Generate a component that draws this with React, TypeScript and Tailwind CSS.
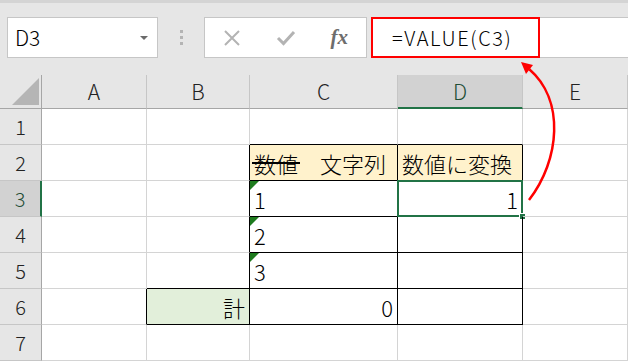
import React from 'react';

const JP = "font-['Noto_Sans_CJK_JP',sans-serif]";

function Cell({ className = '', children }: { className?: string; children?: React.ReactNode }) {
  return (
    <div className={`relative flex items-center border-r border-b px-[4px] text-[22px] font-light leading-none text-black ${className}`}>
      {children}
    </div>
  );
}

function Flag() {
  return <span className="absolute top-0 left-0 w-0 h-0 border-t-[9px] border-r-[9px] border-t-[#1e7b1e] border-r-transparent" />;
}

function RowHead({ n, selected = false }: { n: number; selected?: boolean }) {
  return (
    <div
      className={`flex items-center justify-center border-b border-b-[#c6c6c6] text-[20px] font-light leading-none ${
        selected
          ? 'bg-[#d2d2d2] border-r-2 border-r-[#217346] text-[#1f4e36]'
          : 'bg-[#e6e6e6] border-r border-r-[#a6a6a6] text-[#222]'
      }`}
    >
      {n}
    </div>
  );
}

const grid = 'border-[#d4d4d4]';

export default function App() {
  return (
    <div className={`relative w-[628px] h-[362px] overflow-hidden bg-white ${JP}`}>
      {/* Formula bar */}
      <div className="h-[75px] bg-[#e6e6e6] border-t-[3px] border-[#d4d4d4] flex items-start pt-[14px]">
        <div className="ml-[7px] w-[151px] h-[41px] bg-white border border-[#c6c6c6] flex items-center justify-between pl-[7px] pr-[9px]">
          <span className="text-[21px] font-light text-black leading-none">D3</span>
          <span className="w-0 h-0 border-l-[4px] border-r-[4px] border-t-[4px] border-l-transparent border-r-transparent border-t-[#6b6b6b]" />
        </div>
        <div className="w-[46px] h-[41px] flex flex-col items-center justify-center gap-[3px]">
          <span className="w-[3px] h-[3px] bg-[#b4b4b4]" />
          <span className="w-[3px] h-[3px] bg-[#b4b4b4]" />
          <span className="w-[3px] h-[3px] bg-[#b4b4b4]" />
        </div>
        <div className="w-[163px] h-[41px] bg-white border border-[#c6c6c6] flex items-center">
          <div className="w-[54px] flex justify-center">
            <svg width="18" height="18" viewBox="0 0 18 18">
              <path d="M2 2 L16 16 M16 2 L2 16" stroke="#b3b3b3" strokeWidth="2" fill="none" />
            </svg>
          </div>
          <div className="w-[54px] flex justify-center">
            <svg width="20" height="18" viewBox="0 0 20 18">
              <path d="M2 9 L7.5 14.5 L18 3" stroke="#b3b3b3" strokeWidth="3" fill="none" />
            </svg>
          </div>
          <div className="w-[54px] flex justify-center">
            <span className="font-['Liberation_Serif',serif] italic font-bold text-[21px] text-[#6d6d6d] leading-none">fx</span>
          </div>
        </div>
        <div className="ml-[4px] flex-1 h-[41px] bg-white border-y border-[#c6c6c6] flex">
          <div className="w-[169px] h-[41px] -mt-px border-2 border-[#ff0000] flex items-center pl-[19px]">
            <span className="text-[20px] font-light text-black leading-none tracking-[1.6px]">=VALUE(C3)</span>
          </div>
        </div>
      </div>

      {/* Sheet grid */}
      <div className="grid grid-cols-[42px_105px_103px_148px_125px_105px] grid-rows-[34px_repeat(7,36px)]">
        {/* Column headers */}
        <div className="relative bg-[#e6e6e6] border-r border-b border-[#a6a6a6]">
          <svg className="absolute left-[12px] top-[3px]" width="28" height="28" viewBox="0 0 28 28">
            <path d="M0 27 L27 27 L27 0 Z" fill="#b5b5b5" />
          </svg>
        </div>
        {['A', 'B', 'C', 'D', 'E'].map((c) => (
          <div
            key={c}
            className={`flex items-center justify-center text-[21px] font-light leading-none ${
              c === 'D'
                ? 'bg-[#d2d2d2] border-b-2 border-b-[#217346] border-r border-r-[#c6c6c6] text-[#1f4e36]'
                : 'bg-[#e6e6e6] border-b border-b-[#a6a6a6] border-r border-r-[#c6c6c6] text-[#222]'
            }`}
          >
            {c}
          </div>
        ))}

        {/* Row 1 */}
        <RowHead n={1} />
        <Cell className={grid} />
        <Cell className={grid} />
        <Cell className="border-r-[#d4d4d4] border-b-black" />
        <Cell className="border-r-[#d4d4d4] border-b-black" />
        <Cell className={grid} />

        {/* Row 2 */}
        <RowHead n={2} />
        <Cell className={grid} />
        <Cell className="border-r-black border-b-[#d4d4d4]" />
        <Cell className="border-black bg-[#fff2cc]">
          <span className="relative">
            数値
            <span className="absolute -left-[2px] -right-[2px] top-[48%] h-[1.5px] bg-black" />
          </span>
          <span>　文字列</span>
        </Cell>
        <Cell className="border-black bg-[#fff2cc]">数値に変換</Cell>
        <Cell className={grid} />

        {/* Row 3 */}
        <RowHead n={3} selected />
        <Cell className={grid} />
        <Cell className="border-r-black border-b-[#d4d4d4]" />
        <Cell className="border-black">
          <Flag />
          1
        </Cell>
        <Cell className="border-black justify-end">
          1
          <span className="absolute -top-px -left-px -right-px -bottom-px border-2 border-[#217346]" />
          <span className="absolute -right-[4px] -bottom-[4px] w-[7px] h-[7px] bg-[#217346] border border-white" />
        </Cell>
        <Cell className={grid} />

        {/* Row 4 */}
        <RowHead n={4} />
        <Cell className={grid} />
        <Cell className="border-r-black border-b-[#d4d4d4]" />
        <Cell className="border-black">
          <Flag />
          2
        </Cell>
        <Cell className="border-black" />
        <Cell className={grid} />

        {/* Row 5 */}
        <RowHead n={5} />
        <Cell className={grid} />
        <Cell className="border-black" />
        <Cell className="border-black">
          <Flag />
          3
        </Cell>
        <Cell className="border-black" />
        <Cell className={grid} />

        {/* Row 6 */}
        <RowHead n={6} />
        <Cell className="border-r-black border-b-[#d4d4d4]" />
        <Cell className="border-black bg-[#e2efda] justify-end">計</Cell>
        <Cell className="border-black justify-end">0</Cell>
        <Cell className="border-black" />
        <Cell className={grid} />

        {/* Row 7 */}
        <RowHead n={7} />
        <Cell className={grid} />
        <Cell className={grid} />
        <Cell className={grid} />
        <Cell className={grid} />
        <Cell className={grid} />
      </div>

      {/* Red arrow overlay */}
      <svg className="absolute inset-0 pointer-events-none" width="628" height="362" viewBox="0 0 628 362">
        <path d="M529 200 C560 160 565 100 529.3 69.2" stroke="#ff0000" strokeWidth="2.5" fill="none" />
        <path d="M521 62 L533 65 L526 74 Z" fill="#ff0000" />
      </svg>
    </div>
  );
}
